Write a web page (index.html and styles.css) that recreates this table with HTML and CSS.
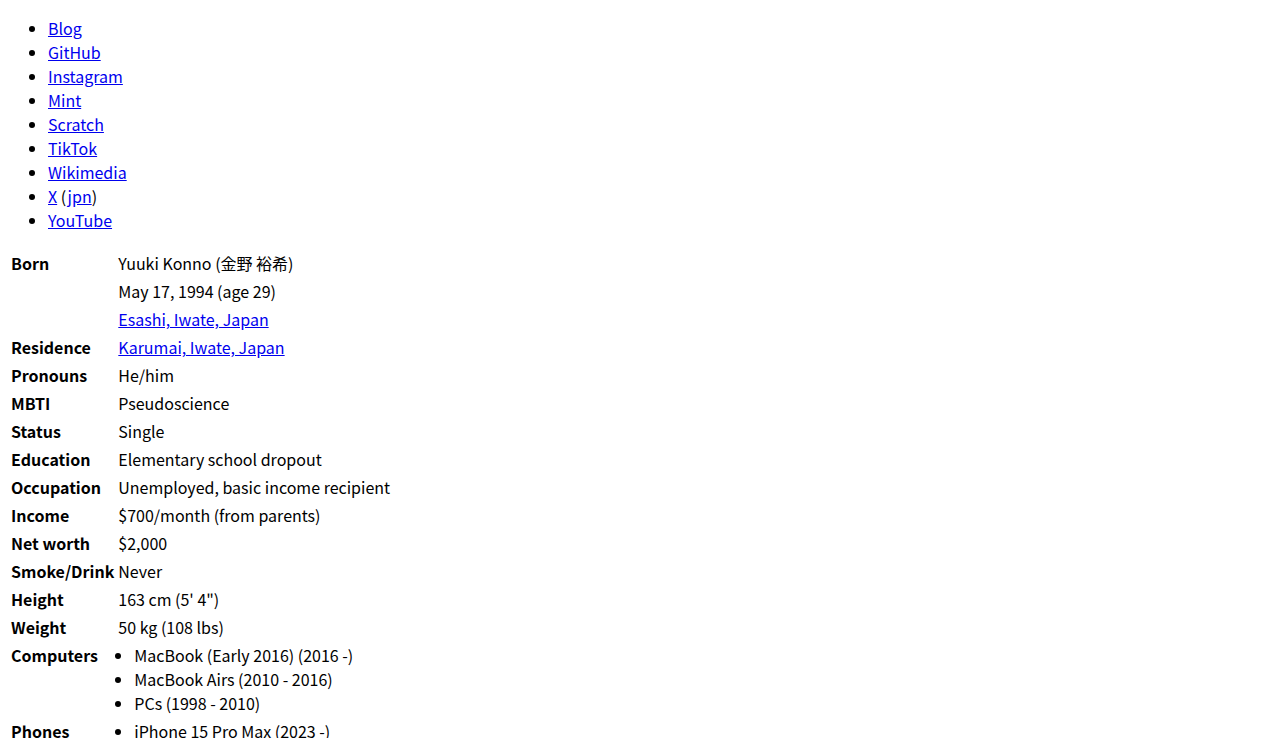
FILE: index.html
```html
<!DOCTYPE html>
<html lang="en">
<head>
  <meta charset="UTF-8" />
  <meta name="viewport" content="width=device-width, initial-scale=1.0" />
  <title>Yuuki Konno</title>
  <link rel="stylesheet" href="styles.css">
</head>
<body>
  <ul class="links">
    <li><a href="#">Blog</a></li>
    <li><a href="#">GitHub</a></li>
    <li><a href="#">Instagram</a></li>
    <li><a href="#">Mint</a></li>
    <li><a href="#">Scratch</a></li>
    <li><a href="#">TikTok</a></li>
    <li><a href="#">Wikimedia</a></li>
    <li><a href="#">X</a> (<a href="#">jpn</a>)</li>
    <li><a href="#">YouTube</a></li>
  </ul>

  <table class="profile">
    <tr><th>Born</th><td>Yuuki Konno (金野 裕希)</td></tr>
    <tr><th></th><td>May 17, 1994 (age 29)</td></tr>
    <tr><th></th><td><a href="#">Esashi, Iwate, Japan</a></td></tr>
    <tr><th>Residence</th><td><a href="#">Karumai, Iwate, Japan</a></td></tr>
    <tr><th>Pronouns</th><td>He/him</td></tr>
    <tr><th>MBTI</th><td>Pseudoscience</td></tr>
    <tr><th>Status</th><td>Single</td></tr>
    <tr><th>Education</th><td>Elementary school dropout</td></tr>
    <tr><th>Occupation</th><td>Unemployed, basic income recipient</td></tr>
    <tr><th>Income</th><td>$700/month (from parents)</td></tr>
    <tr><th>Net worth</th><td>$2,000</td></tr>
    <tr><th>Smoke/Drink</th><td>Never</td></tr>
    <tr><th>Height</th><td>163 cm (5' 4")</td></tr>
    <tr><th>Weight</th><td>50 kg (108 lbs)</td></tr>
    <tr>
      <th>Computers</th>
      <td>
        <ul>
          <li>MacBook (Early 2016) (2016 -)</li>
          <li>MacBook Airs (2010 - 2016)</li>
          <li>PCs (1998 - 2010)</li>
        </ul>
      </td>
    </tr>
    <tr>
      <th>Phones</th>
      <td>
        <ul>
          <li>iPhone 15 Pro Max (2023 -)</li>
        </ul>
      </td>
    </tr>
  </table>
</body>
</html>
```

FILE: styles.css
```css
body {
  font-family: "Noto Sans CJK JP", "Noto Sans", sans-serif;
  font-size: 16px;
  line-height: 24px;
  color: #000;
  background: #fff;
  margin: 0 8px 8px;
}
a {
  color: #0000ee;
}
.links {
  margin: 16px 0;
  padding-left: 40px;
}
.profile th {
  text-align: left;
  vertical-align: top;
  font-weight: bold;
}
.profile td {
  vertical-align: top;
}
.profile ul {
  margin: 0;
  padding-left: 16px;
}
```
